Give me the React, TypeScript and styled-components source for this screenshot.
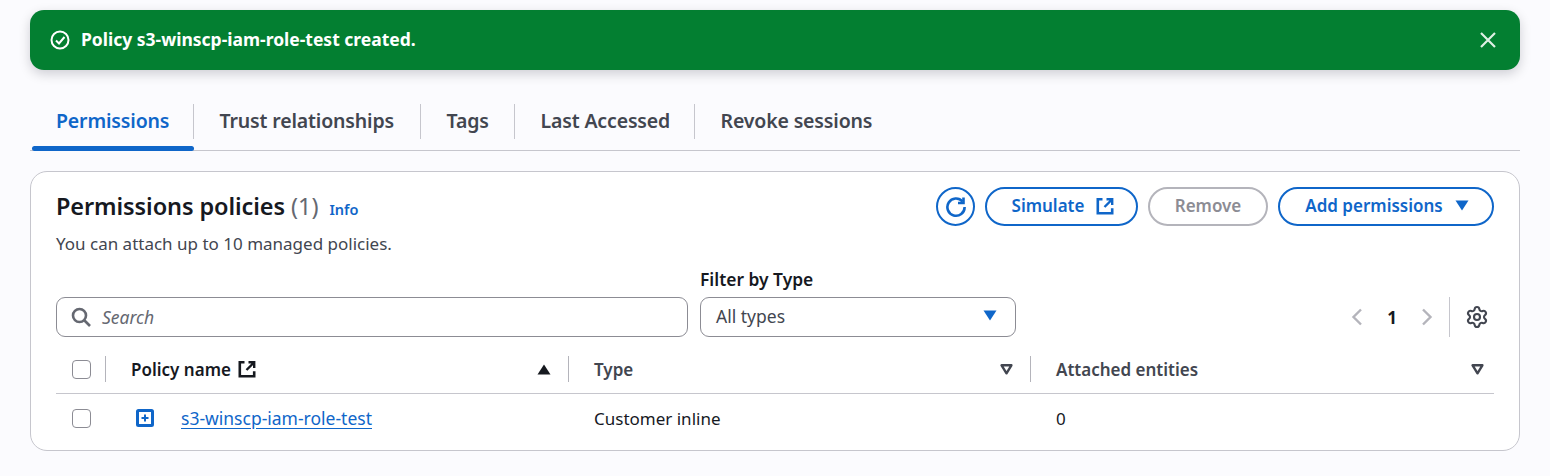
import styled, { createGlobalStyle } from "styled-components";
import { Settings } from "lucide-react";

const GlobalStyle = createGlobalStyle`
  html, body {
    margin: 0;
    padding: 0;
    background: #fbfbfe;
    font-family: "Noto Sans", "Open Sans", sans-serif;
    color: #16191f;
  }
`;

const Page = styled.div`
  width: 1490px;
  height: 466px;
  padding: 10px 30px 0;
  overflow: hidden;
`;

const Flash = styled.div`
  height: 60px;
  background: #037f31;
  border-radius: 14px;
  box-shadow: 0 4px 12px rgba(0, 7, 22, 0.18);
  color: #fff;
  display: flex;
  align-items: center;
  padding: 0 23px 0 20px;
  gap: 11px;
`;

const FlashText = styled.div`
  flex: 1;
  font-size: 17.5px;
  font-weight: 700;
  line-height: 24px;
  padding-bottom: 2px;
`;

const TabBar = styled.div`
  margin-top: 33px;
  height: 47px;
  border-bottom: 1px solid #c6c6cd;
  display: flex;
`;

const Tab = styled.div<{ $active?: boolean; $last?: boolean; $width: number }>`
  position: relative;
  width: ${(p) => p.$width}px;
  height: 47px;
  padding: 0 0 12px ${(p) => (p.$active ? "26px" : "25.5px")};
  display: flex;
  align-items: center;
  font-size: 19.5px;
  font-weight: 600;
  letter-spacing: -0.15px;
  white-space: nowrap;
  color: ${(p) => (p.$active ? "#0f66c9" : "#424650")};
  box-sizing: border-box;

  &::after {
    content: "";
    display: ${(p) => (p.$last ? "none" : "block")};
    position: absolute;
    right: 0;
    top: 1px;
    height: 35px;
    width: 1px;
    background: #c6c6cd;
  }

  &::before {
    content: "";
    display: ${(p) => (p.$active ? "block" : "none")};
    position: absolute;
    left: 2px;
    right: 0;
    bottom: -1px;
    height: 5px;
    border-radius: 3px;
    background: #0f66c9;
  }
`;

const Card = styled.div`
  margin-top: 20px;
  height: 280px;
  box-sizing: border-box;
  border: 1px solid #c6c6cd;
  border-radius: 17px;
  background: #fff;
  padding: 15px 25px 0;
`;

const HeaderRow = styled.div`
  display: flex;
  justify-content: space-between;
  align-items: flex-start;
`;

const TitleBlock = styled.div`
  padding-top: 1px;
`;

const TitleLine = styled.div`
  display: flex;
  align-items: baseline;
  height: 36px;
  line-height: 36px;
`;

const Title = styled.span`
  font-size: 23.5px;
  font-weight: 600;
  letter-spacing: -0.1px;
  color: #16191f;
`;

const Count = styled.span`
  font-size: 23.5px;
  color: #656871;
  margin-left: 6px;
`;

const InfoLink = styled.span`
  font-size: 14.5px;
  font-weight: 600;
  color: #0f66c9;
  margin-left: 11px;
`;

const Description = styled.div`
  font-size: 17px;
  line-height: 23px;
  color: #424650;
  margin-top: 8px;
`;

const Actions = styled.div`
  display: flex;
  gap: 10px;
  align-items: center;
`;

const Button = styled.div<{ $disabled?: boolean }>`
  height: 39px;
  box-sizing: border-box;
  border: 2px solid ${(p) => (p.$disabled ? "#b4b4bb" : "#0f66c9")};
  border-radius: 20px;
  background: #fff;
  color: ${(p) => (p.$disabled ? "#8c8c94" : "#0f66c9")};
  display: flex;
  align-items: center;
  justify-content: center;
  font-size: 17px;
  font-weight: 600;
  padding-bottom: 2px;
`;

const IconButton = styled(Button)`
  width: 39px;
  padding-bottom: 0;
`;

const SimulateButton = styled(Button)`
  width: 153px;
  gap: 12px;
  padding-left: 3px;
`;

const RemoveButton = styled(Button)`
  width: 120px;
`;

const AddButton = styled(Button)`
  width: 216px;
  gap: 12px;
  padding-left: 2px;
`;

const Toolbar = styled.div`
  margin-top: 14px;
  display: flex;
  align-items: flex-end;
`;

const SearchBox = styled.div`
  width: 632px;
  height: 40px;
  box-sizing: border-box;
  border: 1px solid #8c8c94;
  border-radius: 9px;
  background: #fff;
  display: flex;
  align-items: center;
  padding-left: 14px;
  gap: 11px;
  font-size: 17.5px;
  font-style: italic;
  color: #656871;
`;

const FilterField = styled.div`
  margin-left: 12px;
  width: 316px;
`;

const FilterLabel = styled.div`
  font-size: 17.4px;
  font-weight: 600;
  line-height: 20px;
  color: #16191f;
  height: 28px;
`;

const Select = styled.div`
  height: 40px;
  box-sizing: border-box;
  border: 1px solid #8c8c94;
  border-radius: 9px;
  display: flex;
  align-items: center;
  justify-content: space-between;
  padding: 0 18px 2px 15px;
  font-size: 17.5px;
  color: #424650;
`;

const Pager = styled.div`
  margin-left: auto;
  height: 40px;
  display: flex;
  align-items: center;
  padding-right: 5px;
`;

const PageNumber = styled.span`
  font-size: 17px;
  font-weight: 700;
  margin: 0 24px 0 24px;
`;

const PagerDivider = styled.span`
  width: 1px;
  height: 40px;
  background: #c6c6cd;
  margin: 0 15px 0 16px;
`;

const TableRow = styled.div<{ $head?: boolean }>`
  display: grid;
  grid-template-columns: 49px 463px 462px 464px;
  align-items: center;
  height: ${(p) => (p.$head ? "57px" : "48px")};
  padding-top: ${(p) => (p.$head ? "8px" : "0")};
  border-bottom: ${(p) => (p.$head ? "1px solid #c6c6cd" : "none")};
  box-sizing: border-box;
`;

const HeadCell = styled.div<{ $first?: boolean; $last?: boolean }>`
  position: relative;
  display: flex;
  align-items: center;
  height: 26px;
  padding: 0 ${(p) => (p.$last ? "10px" : "17px")} 0 26px;
  font-size: 17px;
  font-weight: 600;
  color: ${(p) => (p.$first ? "#16191f" : "#424650")};

  &::before {
    content: "";
    position: absolute;
    left: 0;
    top: 0;
    bottom: 0;
    width: 1px;
    background: #b4b4bb;
  }
`;

const HeadLabel = styled.span`
  flex: 1;
  display: flex;
  align-items: center;
  gap: 7px;
`;

const CheckCell = styled.div`
  padding-left: 16px;
`;

const Checkbox = styled.div`
  width: 19px;
  height: 19px;
  box-sizing: border-box;
  border: 1px solid #8c8c94;
  border-radius: 4px;
  background: #fff;
`;

const NameCell = styled.div`
  display: flex;
  align-items: center;
  padding-left: 31px;
  gap: 27px;
`;

const PolicyLink = styled.span`
  font-size: 17.5px;
  color: #0f66c9;
  text-decoration: underline;
  text-underline-offset: 3px;
`;

const BodyCell = styled.div`
  padding-left: 26px;
  font-size: 17px;
  color: #16191f;
`;

const External = ({ color }: { color: string }) => (
  <svg width="18" height="18" viewBox="0 0 18 18" fill="none" stroke={color} strokeWidth="2.6">
    <path d="M6.5 2.3H1.8v14h14.4v-5" />
    <path d="M10.5 2.3h5.7V8M16 2.5L8.5 10" strokeWidth="2.4" />
  </svg>
);

const Caret = ({ color, size = 14 }: { color: string; size?: number }) => (
  <svg width={size} height={size * 0.8} viewBox="0 0 14 11">
    <path d="M0.5 0.5h13L7 10.5z" fill={color} />
  </svg>
);

const CaretUp = () => (
  <svg width="14" height="11" viewBox="0 0 14 11">
    <path d="M0.5 10.5h13L7 0.5z" fill="#16191f" />
  </svg>
);

const SortDown = () => (
  <svg width="13" height="11" viewBox="0 0 13 11" fill="none" stroke="#424650" strokeWidth="2.4">
    <path d="M1.6 1.3h9.8L6.5 9.3z" strokeLinejoin="round" />
  </svg>
);

export default function App() {
  return (
    <>
      <GlobalStyle />
      <Page>
        <Flash>
          <svg width="20" height="20" viewBox="0 0 20 20" fill="none" stroke="#fff" strokeWidth="2">
            <circle cx="10" cy="10" r="8.5" />
            <path d="M6 10.5l3 3 5.5-6.5" />
          </svg>
          <FlashText>Policy s3-winscp-iam-role-test created.</FlashText>
          <svg width="18" height="18" viewBox="0 0 18 18" stroke="#dff0e4" strokeWidth="2.2">
            <path d="M2 2l14 14M16 2L2 16" />
          </svg>
        </Flash>

        <TabBar>
          <Tab $active $width={164}>Permissions</Tab>
          <Tab $width={227}>Trust relationships</Tab>
          <Tab $width={94}>Tags</Tab>
          <Tab $width={180}>Last Accessed</Tab>
          <Tab $last $width={200}>Revoke sessions</Tab>
        </TabBar>

        <Card>
          <HeaderRow>
            <TitleBlock>
              <TitleLine>
                <Title>Permissions policies</Title>
                <Count>(1)</Count>
                <InfoLink>Info</InfoLink>
              </TitleLine>
              <Description>You can attach up to 10 managed policies.</Description>
            </TitleBlock>
            <Actions>
              <IconButton>
                <svg width="22" height="22" viewBox="0 0 22 22" fill="none" stroke="#0f66c9" strokeWidth="2.6">
                  <path d="M17.5 5.5A8.6 8.6 0 1 0 19.6 11" />
                  <path d="M18.5 1.5v5.5h-5.5" />
                </svg>
              </IconButton>
              <SimulateButton>
                Simulate
                <External color="#0f66c9" />
              </SimulateButton>
              <RemoveButton $disabled>Remove</RemoveButton>
              <AddButton>
                Add permissions
                <Caret color="#0f66c9" />
              </AddButton>
            </Actions>
          </HeaderRow>

          <Toolbar>
            <SearchBox>
              <svg width="20" height="20" viewBox="0 0 20 20" fill="none" stroke="#656871" strokeWidth="2.6">
                <circle cx="8.5" cy="8.5" r="6.5" />
                <path d="M13.5 13.5L19 19" />
              </svg>
              Search
            </SearchBox>
            <FilterField>
              <FilterLabel>Filter by Type</FilterLabel>
              <Select>
                All types
                <Caret color="#0f66c9" />
              </Select>
            </FilterField>
            <Pager>
              <svg width="12" height="20" viewBox="0 0 12 20" fill="none" stroke="#b4b4bb" strokeWidth="2.4">
                <path d="M10 2.5L2.5 10l7.5 7.5" />
              </svg>
              <PageNumber>1</PageNumber>
              <svg width="12" height="20" viewBox="0 0 12 20" fill="none" stroke="#b4b4bb" strokeWidth="2.4">
                <path d="M2 2.5L9.5 10 2 17.5" />
              </svg>
              <PagerDivider />
              <Settings size={24} color="#424650" strokeWidth={2.1} />
            </Pager>
          </Toolbar>

          <TableRow $head>
            <CheckCell>
              <Checkbox />
            </CheckCell>
            <HeadCell $first>
              <HeadLabel>
                Policy name
                <External color="#16191f" />
              </HeadLabel>
              <CaretUp />
            </HeadCell>
            <HeadCell>
              <HeadLabel>Type</HeadLabel>
              <SortDown />
            </HeadCell>
            <HeadCell $last>
              <HeadLabel>Attached entities</HeadLabel>
              <SortDown />
            </HeadCell>
          </TableRow>

          <TableRow>
            <CheckCell>
              <Checkbox />
            </CheckCell>
            <NameCell>
              <svg width="18" height="18" viewBox="0 0 18 18" fill="none" stroke="#0f66c9" strokeWidth="3">
                <rect x="1.5" y="1.5" width="15" height="15" rx="1" />
                <path d="M5.5 9h7M9 5.5v7" strokeWidth="2" />
              </svg>
              <PolicyLink>s3-winscp-iam-role-test</PolicyLink>
            </NameCell>
            <BodyCell>Customer inline</BodyCell>
            <BodyCell>0</BodyCell>
          </TableRow>
        </Card>
      </Page>
    </>
  );
}
